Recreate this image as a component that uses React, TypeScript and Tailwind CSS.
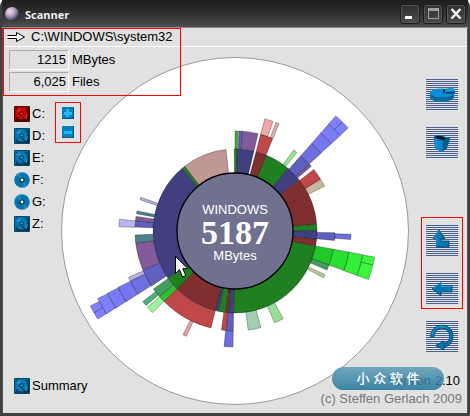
import type { ReactNode } from "react";

type Slice = [inner: number, outer: number, from: number, to: number, color: string];

const CENTER = 174;

// radius of each directory level, from the hub outwards
const RINGS = [58, 82, 100, 116, 130, 142, 153, 163];

const slices: Slice[] = [
  // level 1
  [0, 1, -0.5, 1.6, "#207f20"],
  [0, 1, 1.6, 13.3, "#403f7f"],
  [0, 1, 14.9, 22.6, "#7f2f30"],
  [0, 1, 22.6, 40.4, "#207f20"],
  [0, 1, 40.4, 51.3, "#403f7f"],
  [0, 1, 51.3, 85.3, "#7f2f30"],
  [0, 1, 85.3, 89.8, "#207f20"],
  [0, 1, 89.8, 95.8, "#403f7f"],
  [0, 1, 95.8, 100.6, "#7f2f30"],
  [0, 1, 100.6, 181, "#207f20"],
  [0, 1, 181, 184.7, "#403f7f"],
  [0, 1, 184.7, 186.7, "#7f2f30"],
  [0, 1, 186.7, 191.8, "#207f20"],
  [0, 1, 191.8, 193.9, "#403f7f"],
  [0, 1, 193.9, 225, "#7f2f30"],
  [0, 1, 225, 235, "#207f20"],
  [0, 1, 235, 319.9, "#403f7f"],
  [0, 1, 319.9, 322.2, "#207f20"],
  [0, 1, 322.2, 353.7, "#c09794"],
  // level 2
  [1, 2, 0, 1.5, "#30c030"],
  [1, 2, 1.6, 2.4, "#c8c8c8"],
  [1, 2, 2.5, 4.3, "#5f5fc0"],
  [1, 2, 4.3, 13.3, "#825a9a"],
  [1, 2, 14.9, 22.2, "#c04848"],
  [1, 2, 35.9, 38.2, "#98e498"],
  [1, 2, 41.1, 48.1, "#5f5fc0"],
  [1, 2, 48.1, 49.7, "#825a9a"],
  [1, 2, 52, 58.9, "#c04848"],
  [1, 2, 58.9, 63.4, "#c8b79c"],
  [1, 2, 91, 95.4, "#5f5fc0"],
  [1, 2, 100.5, 109.8, "#20c828"],
  [1, 2, 109.8, 113, "#409f60"],
  [1, 2, 116, 117.8, "#b0cf9a"],
  [1, 2, 151.2, 156.7, "#98e098"],
  [1, 2, 165, 172.4, "#a0cfb2"],
  [1, 2, 181, 185, "#5f5fc0"],
  [1, 2, 185, 187.8, "#c04848"],
  [1, 2, 193.9, 225.2, "#c04848"],
  [1, 2, 225.2, 229, "#30c030"],
  [1, 2, 229, 234.6, "#409f60"],
  [1, 2, 236.7, 247.1, "#5f5fc0"],
  [1, 2, 247.1, 263.1, "#825a9a"],
  [1, 2, 263.1, 267.7, "#50808f"],
  [1, 2, 272.3, 275.9, "#5f5fc0"],
  [1, 2, 275.9, 278.4, "#825a9a"],
  [1, 2, 279.9, 281.6, "#50808f"],
  [1, 2, 288.2, 289.7, "#b4b4e8"],
  // level 3
  [2, 3, 14.9, 19.1, "#f0a8a8"],
  [2, 3, 20.7, 22.3, "#e8b0a4"],
  [2, 3, 41.2, 47.9, "#6f6fe0"],
  [2, 3, 91.6, 94.2, "#6f6fe0"],
  [2, 3, 100.5, 109.9, "#28e030"],
  [2, 3, 181, 185.4, "#6f6fe0"],
  [2, 3, 204.8, 206.6, "#f0a0a0"],
  [2, 3, 225.3, 228.9, "#9cf49c"],
  [2, 3, 230.1, 232.6, "#50b080"],
  [2, 3, 236.9, 244.5, "#6f6fe0"],
  [2, 3, 244.5, 246.5, "#bcb0e0"],
  [2, 3, 272.1, 275.8, "#b7b7f0"],
  // level 4 and deeper
  [3, 4, 41.2, 47.8, "#7676f2"],
  [3, 4, 100.5, 110, "#34f038"],
  [3, 4, 237, 244.3, "#7676f2"],
  [4, 5, 41.2, 47.8, "#7b7bf8"],
  [4, 5, 100.6, 103.9, "#3cf83c"],
  [4, 5, 103.9, 110, "#3cf83c"],
  [4, 5, 237.1, 244, "#7b7bf8"],
  [5, 6, 41.2, 44.5, "#7f7fff"],
  [5, 6, 44.5, 47.7, "#7f7fff"],
  [5, 6, 237.2, 243.8, "#7f7fff"],
  [6, 7, 237.3, 239.9, "#7f7fff"],
  [6, 7, 239.9, 242.6, "#7f7fff"],
];

const polar = (r: number, deg: number) => {
  const a = (deg * Math.PI) / 180;
  return `${(CENTER + r * Math.sin(a)).toFixed(2)} ${(CENTER - r * Math.cos(a)).toFixed(2)}`;
};

const slicePath = ([inner, outer, from, to]: Slice) => {
  const r0 = RINGS[inner];
  const r1 = RINGS[outer];
  return `M${polar(r0, from)}L${polar(r1, from)}A${r1} ${r1} 0 0 1 ${polar(r1, to)}L${polar(r0, to)}A${r0} ${r0} 0 0 0 ${polar(r0, from)}Z`;
};

const drives = [
  { name: "C:", type: "disk", active: true },
  { name: "D:", type: "disk" },
  { name: "E:", type: "disk" },
  { name: "F:", type: "cd" },
  { name: "G:", type: "cd" },
  { name: "Z:", type: "disk" },
];

function DiskIcon({ active = false }: { active?: boolean }) {
  return (
    <svg className="size-4 shrink-0" viewBox="0 0 16 16" aria-hidden="true">
      <rect width="16" height="16" rx="1" fill={active ? "#5c0000" : "#044766"} />
      <path d="M1 1h13v1H2v12H1z" fill={active ? "#a00808" : "#087098"} />
      <circle cx="7.5" cy="7.5" r="6" fill={active ? "#c80808" : "#0878b8"} />
      <path d="M7.5 7.5 2 5a6 6 0 0 1 4-3.4z" fill={active ? "#e02020" : "#1694d4"} />
      <circle cx="7.5" cy="7.5" r="2" fill="none" stroke={active ? "#600000" : "#033c58"} />
      <rect x="7" y="7" width="1" height="1" fill={active ? "#ff6060" : "#50b8e8"} />
      <path d="M8 9l4 5 2-1V7" fill="none" stroke={active ? "#300000" : "#012434"} strokeWidth="1.6" />
      <path d="M8.5 9l4 4 .8-5" fill="none" stroke={active ? "#f04040" : "#28a4e4"} strokeWidth="1" />
    </svg>
  );
}

function CdIcon() {
  return (
    <svg className="size-4 shrink-0" viewBox="0 0 16 16" aria-hidden="true">
      <circle cx="8" cy="8" r="7.8" fill="#0878b4" />
      <path d="M8 8 2 3a8 8 0 0 1 4-2.5zM8 8l6 5a8 8 0 0 1-4 2.5z" fill="#2090c4" />
      <circle cx="8" cy="8" r="5" fill="none" stroke="#066090" strokeWidth=".6" />
      <circle cx="8" cy="8" r="2.6" fill="#02283c" />
      <circle cx="8" cy="8" r="1.4" fill="#fff" />
    </svg>
  );
}

function ZoomButton({ label, children }: { label: string; children: ReactNode }) {
  return (
    <button type="button" aria-label={label} className="block">
      <svg className="size-3" viewBox="0 0 12 12">
        <rect width="12" height="12" fill="#0480bc" />
        <path d="M0 12h12V0h-1v11H0z" fill="#03547c" />
        {children}
      </svg>
    </button>
  );
}

function ToolButton({ label, children }: { label: string; children: ReactNode }) {
  return (
    <button type="button" aria-label={label} className="block">
      <svg className="h-[31px] w-8" viewBox="0 0 32 31">
        {Array.from({ length: 16 }, (_, i) => (
          <rect key={i} y={i * 2} width="32" height="1" fill="#4b6290" />
        ))}
        {children}
      </svg>
    </button>
  );
}

function WindowButton({ label, children }: { label: string; children: ReactNode }) {
  return (
    <button
      type="button"
      aria-label={label}
      className="size-5 rounded-[3px] border border-[#1c1c1c] bg-linear-to-b from-[#303030] to-[#4c4c4c] shadow-[inset_0_0_0_1px_#555]"
    >
      <svg className="size-[18px]" viewBox="0 0 18 18">
        {children}
      </svg>
    </button>
  );
}

function TitleBar() {
  return (
    <header className="flex h-7 items-center border-b border-[#909090] bg-linear-to-b from-[#1e1e1e] via-[#303030] to-[#4e4e4e] pr-0.5 pl-[3px]">
      <svg className="size-[14px]" viewBox="0 0 14 14" aria-hidden="true">
        <defs>
          <radialGradient id="ball" cx=".35" cy=".3" r=".75">
            <stop offset="0" stopColor="#f4d8ec" />
            <stop offset=".45" stopColor="#b8a4c4" />
            <stop offset=".8" stopColor="#585878" />
            <stop offset="1" stopColor="#202030" />
          </radialGradient>
        </defs>
        <circle cx="7" cy="7" r="7" fill="url(#ball)" />
      </svg>
      <h1 className="mt-0.5 ml-1.5 flex-1 font-['Open_Sans',sans-serif] text-[11px] font-bold text-[#eee]">Scanner</h1>
      <div className="flex gap-[3px]">
        <WindowButton label="Minimize">
          <rect x="4" y="11" width="7" height="3" fill="#fff" />
        </WindowButton>
        <WindowButton label="Maximize">
          <path d="M4 3h11v11H4zM5 6v7h9V6z" fill="#a0a0a0" fillRule="evenodd" />
        </WindowButton>
        <WindowButton label="Close">
          <path d="M4.5 4l9 9.5M13.5 4l-9 9.5" stroke="#fff" strokeWidth="2.4" />
        </WindowButton>
      </div>
    </header>
  );
}

function Readout({ value, unit }: { value: string; unit: string }) {
  return (
    <div className="flex items-center gap-[3px]">
      <dd className="h-5 w-[60px] border border-t-[#aaa] border-r-white border-b-white border-l-[#aaa] pr-0.5 text-right leading-[18px]">
        {value}
      </dd>
      <dt className="order-last">{unit}</dt>
    </div>
  );
}

function DiskChart() {
  return (
    <svg className="size-[348px] overflow-visible" viewBox="0 0 348 348" role="img" aria-label="Disk usage of WINDOWS">
      <circle cx={CENTER} cy={CENTER} r="173.5" fill="#fff" stroke="#999" />
      {slices.map((slice, i) => (
        <path key={i} d={slicePath(slice)} fill={slice[4]} stroke="#000" strokeOpacity=".38" strokeWidth=".8" />
      ))}
      <circle cx={CENTER} cy={CENTER} r="58" fill="#70708f" stroke="#000" strokeWidth="1.3" />
      <g fill="#fff" textAnchor="middle">
        <text x={CENTER} y="157" fontSize="13">WINDOWS</text>
        <text x={CENTER} y="187" fontSize="34" fontWeight="bold" fontFamily="'Liberation Serif', serif">5187</text>
        <text x={CENTER} y="203" fontSize="13">MBytes</text>
      </g>
      <path d="M114.5 199.5v17l4-3.8 3 7.3 3.3-1.5-3-6.800h5.2z" fill="#fff" stroke="#000" />
    </svg>
  );
}

export default function App() {
  return (
    <div className="flex min-h-screen flex-col rounded-t-md border-2 border-[#404040] border-t-0 border-b-[3px] bg-[#e1e1e1] font-['Liberation_Sans',Arial,sans-serif] text-[13px] leading-4 text-black">
      <TitleBar />
      <main className="relative flex flex-1 flex-col border-x border-[#555]">
        <div className="flex h-[19px] items-center gap-1.5 border-b border-white pl-1">
          <svg className="h-3 w-[18px]" viewBox="0 0 18 12" aria-hidden="true">
            <path d="M.5 4.5h9V1.500l8 4.500-8 4.500v-3h-9" fill="#fff" stroke="#000" />
          </svg>
          <span>C:\WINDOWS\system32</span>
        </div>

        <div className="grid flex-1 grid-cols-1">
          <div className="col-start-1 row-start-1 flex justify-center pt-2.5">
            <DiskChart />
          </div>

          <div className="z-10 col-start-1 row-start-1 flex justify-between">
            <div className="flex flex-col pt-[3px] pb-[19px] pl-1.5">
              <dl className="flex flex-col gap-0.5">
                <Readout value="1215" unit="MBytes" />
                <Readout value="6,025" unit="Files" />
              </dl>
              <div className="mt-2.5 flex items-start">
                <nav className="flex w-[46px] flex-col gap-1.5 pt-1 pl-[5px]">
                  {drives.map(({ name, type, active }) => (
                    <button key={name} type="button" className="flex items-center gap-0.5">
                      {type === "cd" ? <CdIcon /> : <DiskIcon active={active} />}
                      <span>{name}</span>
                    </button>
                  ))}
                </nav>
                <div className="flex flex-col gap-[7px] border border-[#ff0000] px-1.5 py-1">
                  <ZoomButton label="Zoom in">
                    <path d="M4 2h3v3h3v3H7v2H4V8H2V5h2z" fill="#28b4f4" />
                  </ZoomButton>
                  <ZoomButton label="Zoom out">
                    <path d="M2 5h8v3H2z" fill="#28b4f4" />
                  </ZoomButton>
                </div>
              </div>
              <button type="button" className="mt-auto flex items-center gap-0.5 pl-[5px]">
                <DiskIcon />
                <span>Summary</span>
              </button>
            </div>

            <div className="flex flex-col items-end pt-8 pr-1 pb-1.5">
              <div className="flex w-[42px] flex-col items-center gap-[17px]">
                <ToolButton label="Show free space">
                  <path d="M4 14v4c1 6 23 6 24 0v-4z" fill="#04608c" />
                  <ellipse cx="16" cy="14" rx="12" ry="4.5" fill="#0a90d8" />
                  <path d="M4 16c3 4 14 5 18 3v3c-6 1.500-16 1-18-3z" fill="#0570a8" />
                  <path d="M15.5 14.500 21 9.500l7 1.500v3z" fill="#0570a8" />
                  <path d="M17 13v-2.500h2l-1 3z" fill="#000" />
                  <path d="M19 13l3-4h5l2 1.500v2z" fill="#149ce0" />
                  <path d="M19 13l10-.5v2l-8 .5z" fill="#04507c" />
                </ToolButton>
                <ToolButton label="Recycle bin">
                  <path d="M7.5 10 10 8h5l5 2 4.500.5L21 21.500l-4.500 3-3-.5-4.500-3z" fill="#0670a8" />
                  <path d="M9 10l2-1.200 5 .7 4.500 2-2.500 1.500-6-1z" fill="#001018" />
                  <path d="M8 11.500l5 1.500 4 .5-.5 10.500-3-.5-4-3z" fill="#0a88cc" />
                  <path d="M9.500 12.500l2 8" stroke="#28a8e8" strokeWidth=".8" />
                  <path d="M17 13.500l7-3-3.500 11-4 2.500z" fill="#045a88" />
                </ToolButton>
              </div>
              <div className="mt-[59px] flex w-[42px] flex-col items-center gap-[17px] border border-[#ff0000] pt-[7px] pb-1">
                <ToolButton label="Parent directory">
                  <path d="M13 5l6 8.5h-4V16h8v6H10.500v-8.500H7z" fill="#0578b4" stroke="#043c5c" strokeWidth=".8" />
                  <path d="M13 5.500l-5 7.500h3v8" fill="none" stroke="#20a4e4" />
                </ToolButton>
                <ToolButton label="Back">
                  <path d="M6 16l9-6.500v3.500h11v6H15v3.500z" fill="#0578b4" stroke="#043c5c" strokeWidth=".8" />
                  <path d="M7 15.500l8-5.500v3.500h10" fill="none" stroke="#20a4e4" />
                </ToolButton>
              </div>
              <div className="mt-3 flex w-[42px] justify-center">
                <ToolButton label="Rescan">
                  <path d="M6.500 16.500a9.500 9.500 0 1 1 11.500 8" fill="none" stroke="#043c5c" strokeWidth="4" />
                  <path d="M6.500 16.500a9.500 9.500 0 1 1 11.500 8" fill="none" stroke="#0578b4" strokeWidth="2.800" />
                  <path d="M6 13.500a9.500 9.500 0 0 1 14-7" fill="none" stroke="#20a4e4" />
                  <path d="M9.500 24.500l8.500-4.500v9z" fill="#0578b4" stroke="#043c5c" strokeWidth=".8" />
                </ToolButton>
              </div>
              <footer className="relative mt-auto flex flex-col gap-0.5 pr-px text-right">
                <span className="pr-0.5">Version 2.10</span>
                <span className="text-[#777]">(c) Steffen Gerlach 2009</span>
                <span className="absolute -top-1.5 right-[19px] flex h-[23px] w-28 items-center justify-center rounded-full bg-linear-to-b from-[#5c9cb8]/85 to-[#1c7498]/85 font-['Liberation_Sans','Noto_Sans_CJK_SC',sans-serif] font-medium text-white">
                  小 众 软 件
                </span>
              </footer>
            </div>
          </div>
        </div>

        <div className="pointer-events-none absolute top-0 left-0 z-20 h-[68px] w-[178px] border border-[#ff0000]" />
      </main>
    </div>
  );
}
